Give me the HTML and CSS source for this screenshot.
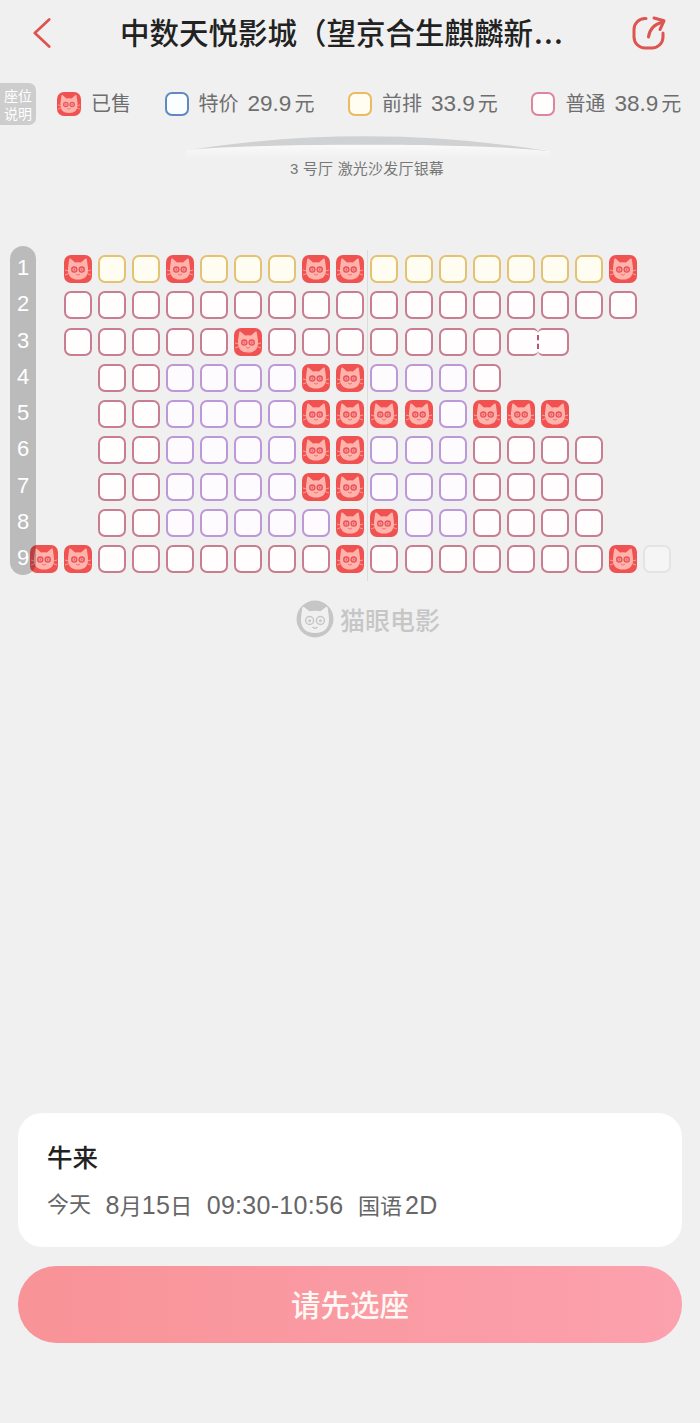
FILE: index.html
```html
<!DOCTYPE html>
<html lang="zh-CN">
<head>
    <meta charset="UTF-8">
    <meta name="viewport" content="width=device-width, initial-scale=1.0">
    <title>选座</title>
    <link rel="stylesheet" href="styles.css">
</head>
<body>
<svg class="defs" width="0" height="0">
    <symbol id="cat" viewBox="0 0 28 28">
        <path class="cat-head" d="M6.8 3.8 L11 7.6 Q14 7 17 7.6 L21.2 3.8 Q22.6 3 22.9 4.8 L24 13 Q24.6 24.6 14 24.6 Q3.4 24.6 4 13 L5.1 4.8 Q5.4 3 6.8 3.8Z"/>
        <circle class="cat-eye" cx="10.3" cy="14.6" r="2.6"/>
        <circle class="cat-eye" cx="17.7" cy="14.6" r="2.6"/>
        <path class="cat-pupil" d="M10.3 13.6 V15.6 M17.7 13.6 V15.6"/>
        <path class="cat-line" d="M12 19 Q14 21.4 16 19"/>
        <path class="cat-whisker" d="M1 15 L4.5 16 M1 20 L4.8 18.6 M27 15 L23.5 16 M27 20 L23.2 18.6"/>
    </symbol>
</svg>

<header class="nav-bar">
    <svg class="nav-back" viewBox="0 0 20 34">
        <path d="M18 2 L2 17 L18 32"/>
    </svg>
    <h1 class="nav-title">中数天悦影城（望京合生麒麟新<span class="nav-dots">...</span></h1>
    <svg class="nav-share" viewBox="0 0 34 34">
        <path d="M14 2.5 H13 A11 11 0 0 0 2 13.5 V21 A11 11 0 0 0 13 32 H20 A11 11 0 0 0 31 21 V17"/>
        <path d="M16.5 21 Q18 9 31 6"/>
        <path d="M22 2 L32 4.8 L28 13.5"/>
    </svg>
</header>

<div class="legend">
    <div class="legend-tip">座位<br>说明</div>
    <div class="legend-list">
        <div class="legend-item"><i class="seat s"><svg><use href="#cat"/></svg></i><span class="legend-text">已售</span></div>
        <div class="legend-item"><i class="seat b"></i><span class="legend-text">特价<span class="price">29.9</span>元</span></div>
        <div class="legend-item"><i class="seat y"></i><span class="legend-text">前排<span class="price">33.9</span>元</span></div>
        <div class="legend-item"><i class="seat p"></i><span class="legend-text">普通<span class="price">38.9</span>元</span></div>
    </div>
</div>

<div class="screen">
    <svg class="screen-arc" viewBox="0 0 380 28">
        <defs>
            <linearGradient id="glow" x1="0" y1="0" x2="0" y2="1">
                <stop offset="0" stop-color="#fafafa"/>
                <stop offset="1" stop-color="#f0f0f0"/>
            </linearGradient>
        </defs>
        <path fill="url(#glow)" d="M6 20 C75 13 300 13 368 20 L372 28 H2Z"/>
        <path fill="#cfd1d3" d="M7 20 Q187 -8 368 21 C300 13 75 13 7 20Z"/>
    </svg>
    <p class="screen-name">3 号厅 激光沙发厅银幕</p>
</div>

<div class="seat-map">
    <div class="center-line"></div>
    <div class="row-rail">
        <span>1</span><span>2</span><span>3</span><span>4</span><span>5</span><span>6</span><span>7</span><span>8</span><span>9</span>
    </div>
    <div class="seat-grid">
        <!-- 1 -->
        <i></i><i class="seat s"><svg><use href="#cat"/></svg></i><i class="seat y"></i><i class="seat y"></i><i class="seat s"><svg><use href="#cat"/></svg></i><i class="seat y"></i><i class="seat y"></i><i class="seat y"></i><i class="seat s"><svg><use href="#cat"/></svg></i><i class="seat s"><svg><use href="#cat"/></svg></i><i class="seat y"></i><i class="seat y"></i><i class="seat y"></i><i class="seat y"></i><i class="seat y"></i><i class="seat y"></i><i class="seat y"></i><i class="seat s"><svg><use href="#cat"/></svg></i><i></i>
        <!-- 2 -->
        <i></i><i class="seat p"></i><i class="seat p"></i><i class="seat p"></i><i class="seat p"></i><i class="seat p"></i><i class="seat p"></i><i class="seat p"></i><i class="seat p"></i><i class="seat p"></i><i class="seat p"></i><i class="seat p"></i><i class="seat p"></i><i class="seat p"></i><i class="seat p"></i><i class="seat p"></i><i class="seat p"></i><i class="seat p"></i><i></i>
        <!-- 3 -->
        <i></i><i class="seat p"></i><i class="seat p"></i><i class="seat p"></i><i class="seat p"></i><i class="seat p"></i><i class="seat s"><svg><use href="#cat"/></svg></i><i class="seat p"></i><i class="seat p"></i><i class="seat p"></i><i class="seat p"></i><i class="seat p"></i><i class="seat p"></i><i class="seat p"></i>
        <div class="seat-pair"><i class="seat p"></i><i class="seat p"></i></div>
        <i></i><i></i><i></i>
        <!-- 4 -->
        <i></i><i></i><i class="seat p"></i><i class="seat p"></i><i class="seat v"></i><i class="seat v"></i><i class="seat v"></i><i class="seat v"></i><i class="seat s"><svg><use href="#cat"/></svg></i><i class="seat s"><svg><use href="#cat"/></svg></i><i class="seat v"></i><i class="seat v"></i><i class="seat v"></i><i class="seat p"></i><i></i><i></i><i></i><i></i><i></i>
        <!-- 5 -->
        <i></i><i></i><i class="seat p"></i><i class="seat p"></i><i class="seat v"></i><i class="seat v"></i><i class="seat v"></i><i class="seat v"></i><i class="seat s"><svg><use href="#cat"/></svg></i><i class="seat s"><svg><use href="#cat"/></svg></i><i class="seat s"><svg><use href="#cat"/></svg></i><i class="seat s"><svg><use href="#cat"/></svg></i><i class="seat v"></i><i class="seat s"><svg><use href="#cat"/></svg></i><i class="seat s"><svg><use href="#cat"/></svg></i><i class="seat s"><svg><use href="#cat"/></svg></i><i></i><i></i><i></i>
        <!-- 6 -->
        <i></i><i></i><i class="seat p"></i><i class="seat p"></i><i class="seat v"></i><i class="seat v"></i><i class="seat v"></i><i class="seat v"></i><i class="seat s"><svg><use href="#cat"/></svg></i><i class="seat s"><svg><use href="#cat"/></svg></i><i class="seat v"></i><i class="seat v"></i><i class="seat v"></i><i class="seat p"></i><i class="seat p"></i><i class="seat p"></i><i class="seat p"></i><i></i><i></i>
        <!-- 7 -->
        <i></i><i></i><i class="seat p"></i><i class="seat p"></i><i class="seat v"></i><i class="seat v"></i><i class="seat v"></i><i class="seat v"></i><i class="seat s"><svg><use href="#cat"/></svg></i><i class="seat s"><svg><use href="#cat"/></svg></i><i class="seat v"></i><i class="seat v"></i><i class="seat v"></i><i class="seat p"></i><i class="seat p"></i><i class="seat p"></i><i class="seat p"></i><i></i><i></i>
        <!-- 8 -->
        <i></i><i></i><i class="seat p"></i><i class="seat p"></i><i class="seat v"></i><i class="seat v"></i><i class="seat v"></i><i class="seat v"></i><i class="seat v"></i><i class="seat s"><svg><use href="#cat"/></svg></i><i class="seat s"><svg><use href="#cat"/></svg></i><i class="seat v"></i><i class="seat v"></i><i class="seat p"></i><i class="seat p"></i><i class="seat p"></i><i class="seat p"></i><i></i><i></i>
        <!-- 9 -->
        <i class="seat s"><svg><use href="#cat"/></svg></i><i class="seat s"><svg><use href="#cat"/></svg></i><i class="seat p"></i><i class="seat p"></i><i class="seat p"></i><i class="seat p"></i><i class="seat p"></i><i class="seat p"></i><i class="seat p"></i><i class="seat s"><svg><use href="#cat"/></svg></i><i class="seat p"></i><i class="seat p"></i><i class="seat p"></i><i class="seat p"></i><i class="seat p"></i><i class="seat p"></i><i class="seat p"></i><i class="seat s"><svg><use href="#cat"/></svg></i><i class="seat g"></i>
    </div>
</div>

<div class="brand">
    <svg class="brand-logo" viewBox="0 0 38 38">
        <circle class="brand-ring" cx="19" cy="19" r="18.5"/>
        <path class="brand-face" d="M8 7 L13.5 11.2 Q19 10.2 24.5 11.2 L30 7 Q31.5 6.4 31.8 8.5 L33 18 Q33.5 33 19 33 Q4.5 33 5 18 L6.2 8.5 Q6.5 6.4 8 7Z"/>
        <circle class="brand-eye" cx="13.6" cy="20.5" r="4"/>
        <circle class="brand-eye" cx="24.4" cy="20.5" r="4"/>
        <circle class="brand-pupil" cx="13.6" cy="20.8" r="1.5"/>
        <circle class="brand-pupil" cx="24.4" cy="20.8" r="1.5"/>
        <path class="brand-eye" d="M16.5 27 Q19 29.5 21.5 27"/>
    </svg>
    <span class="brand-name">猫眼电影</span>
</div>

<section class="movie-card">
    <h2 class="movie-name">牛来</h2>
    <p class="movie-info">
        <span>今天</span>
        <span><b>8</b>月<b>15</b>日</span>
        <span><b>09:30-10:56</b></span>
        <span>国语<b class="lang">2D</b></span>
    </p>
</section>
<button class="buy-btn">请先选座</button>
</body>
</html>
```

FILE: styles.css
```css
* {
    box-sizing: border-box;
}
html, body {
    margin: 0;
    padding: 0;
}
body {
    display: flex;
    flex-direction: column;
    height: 1423px;
    padding-bottom: 80px;
    overflow: hidden;
    background: #f0f0f0;
    font-family: "Liberation Sans", "Noto Sans CJK SC", sans-serif;
}
.defs {
    position: absolute;
}

/* cat */
.cat-head {
    fill: #ffb3ab;
}
.cat-eye {
    fill: #f89a96;
    stroke: #e8525a;
    stroke-width: 1.3;
}
.cat-pupil {
    fill: none;
    stroke: #e8525a;
    stroke-width: 1;
}
.cat-line {
    fill: none;
    stroke: #ee6a66;
    stroke-width: .9;
}
.cat-whisker {
    fill: none;
    stroke: #ffb3ab;
    stroke-width: .8;
}

/* nav */
.nav-bar {
    display: flex;
    align-items: center;
    height: 68px;
    padding: 0 34px 2px 33px;
}
.nav-back {
    width: 18px;
    height: 32px;
    fill: none;
    stroke: #dd5350;
    stroke-width: 3;
    stroke-linecap: round;
    stroke-linejoin: round;
}
.nav-title {
    flex: 1;
    margin: 0 0 4px 69px;
    font-family: "Noto Sans CJK SC", sans-serif;
    font-size: 29.5px;
    font-weight: 500;
    color: #222;
    white-space: nowrap;
}
.nav-dots {
    margin-left: 1px;
    letter-spacing: 1.2px;
}
.nav-share {
    width: 34px;
    height: 34px;
    fill: none;
    stroke: #de5450;
    stroke-width: 3;
    stroke-linecap: round;
    stroke-linejoin: round;
}

/* legend */
.legend {
    display: flex;
    align-items: center;
    height: 42px;
    margin-top: 15px;
}
.legend-tip {
    width: 36px;
    height: 42px;
    padding-top: 3px;
    border-radius: 0 7px 7px 0;
    background: #cdcdcd;
    color: #fff;
    font-family: "Noto Sans CJK SC", sans-serif;
    font-size: 14px;
    line-height: 18px;
    text-align: center;
}
.legend-list {
    display: flex;
    gap: 33.6px;
    margin-left: 21px;
}
.legend-item {
    display: flex;
    align-items: center;
    gap: 10px;
    color: #6e6e6e;
    white-space: nowrap;
}
.legend-item .seat {
    width: 24px;
    height: 24px;
}
.legend-text {
    margin-bottom: 3px;
    font-size: 20px;
}
.price {
    margin: 0 3px 0 9px;
    font-size: 22.5px;
}

/* screen */
.screen {
    margin-top: 5px;
    text-align: center;
}
.screen-arc {
    display: block;
    width: 380px;
    height: 28px;
    margin-left: 181px;
}
.screen-name {
    margin: 0 0 0 34px;
    font-size: 15px;
    line-height: 22px;
    letter-spacing: .2px;
    color: #777;
}

/* seats */
.seat-map {
    position: relative;
    margin-top: 75px;
    padding-left: 30px;
}
.seat-grid {
    display: grid;
    grid-template-columns: repeat(19, 28px);
    grid-auto-rows: 28px;
    gap: 8.25px 6.05px;
}
.seat {
    display: block;
    width: 28px;
    height: 28px;
    border: 2px solid;
    border-radius: 7px;
}
.seat svg {
    display: block;
    width: 100%;
    height: 100%;
}
.seat.s {
    border: 0;
    background: #f05252;
}
.seat.p {
    border-color: #c87d90;
    background: #fffdfd;
}
.seat.y {
    border-color: #e3c272;
    background: #fffdf2;
}
.seat.v {
    border-color: #bd98d8;
    background: #fefbff;
}
.seat.b {
    border-color: #5f89c0;
    background: #fbfeff;
}
.seat.g {
    border-color: #e4e4e4;
    background: #f5f5f5;
}
.legend-item .seat.y {
    border-color: #ebb95f;
}
.legend-item .seat.p {
    border-color: #dd859c;
}
.seat-pair {
    position: relative;
    display: flex;
    grid-column: span 2;
}
.seat-pair .seat {
    flex: 1;
}
.seat-pair .seat:first-child {
    border-right: 0;
    border-radius: 7px 5px 5px 7px;
}
.seat-pair .seat:last-child {
    border-left: 0;
    border-radius: 5px 7px 7px 5px;
}
.seat-pair:after {
    content: '';
    position: absolute;
    left: 50%;
    top: 7px;
    height: 14px;
    margin-left: -1px;
    border-left: 2px dashed #b8566f;
}
.center-line {
    position: absolute;
    left: 367px;
    top: -5px;
    bottom: -8px;
    border-left: 1px solid #dcdcdc;
}
.row-rail {
    position: absolute;
    z-index: 2;
    left: 10px;
    top: -9px;
    width: 26px;
    height: 329px;
    padding-top: 4px;
    border-radius: 13px;
    background: rgba(0, 0, 0, .22);
}
.row-rail span {
    display: block;
    height: 36.25px;
    font-size: 22px;
    line-height: 36px;
    color: #fff;
    text-align: center;
}

/* brand */
.brand {
    display: flex;
    align-items: center;
    justify-content: center;
    gap: 6px;
    margin: 27px 0 auto 36px;
}
.brand-logo {
    width: 38px;
    height: 38px;
}
.brand-ring {
    fill: #c6c6c6;
}
.brand-face {
    fill: #f0f0f0;
}
.brand-eye {
    fill: none;
    stroke: #c6c6c6;
    stroke-width: 1.5;
}
.brand-pupil {
    fill: #c6c6c6;
}
.brand-name {
    font-family: "Noto Sans CJK SC", sans-serif;
    font-size: 25px;
    font-weight: 500;
    color: #c6c6c6;
}

/* bottom */
.movie-card {
    height: 134px;
    margin: 0 18px;
    padding: 25px 29px 0;
    border-radius: 24px;
    background: #fff;
}
.movie-name {
    margin: 0;
    font-family: "Noto Sans CJK SC", sans-serif;
    font-size: 25.5px;
    font-weight: 500;
    line-height: 36px;
    color: #222;
}
.movie-info {
    display: flex;
    gap: 14.5px;
    margin: 15px 0 0;
    font-size: 22px;
    line-height: 32px;
    color: #666;
}
.movie-info b {
    font-size: 25px;
    font-weight: 400;
    letter-spacing: .3px;
}
.movie-info .lang {
    margin-left: 3px;
}
.buy-btn {
    height: 77px;
    margin: 19px 18px 0;
    padding: 0 0 3px;
    border: 0;
    border-radius: 38px;
    background: linear-gradient(90deg, #f89397, #fca1ae);
    color: #fff8f4;
    font-family: "Noto Sans CJK SC", sans-serif;
    font-size: 29.5px;
    font-weight: 500;
}
```
